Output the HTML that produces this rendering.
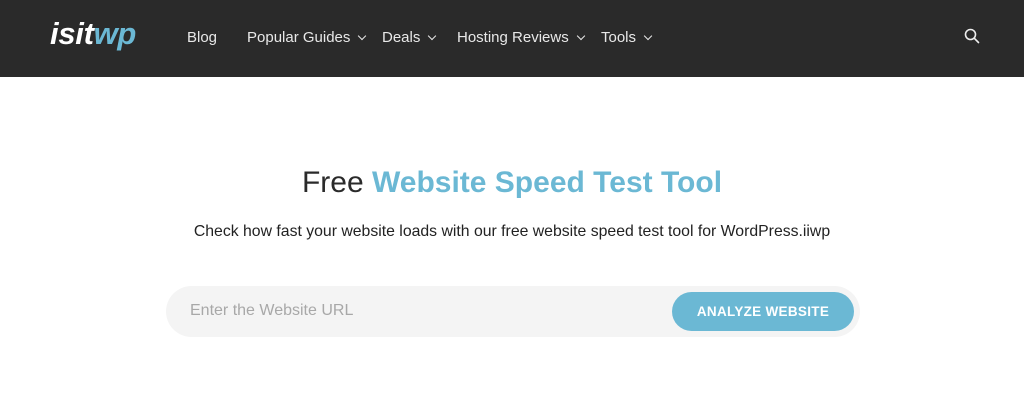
<!DOCTYPE html>
<html><head><style>
*{margin:0;padding:0;box-sizing:border-box}
body{width:1024px;height:407px;background:#fff;font-family:"Liberation Sans",sans-serif;position:relative;overflow:hidden}
.hd{position:absolute;left:0;top:0;width:1024px;height:77px;background:#2a2a2a}
.logo{position:absolute;left:50px;top:16px;font-size:31px;font-weight:bold;font-style:italic;color:#fff;letter-spacing:-0.3px}
.logo span{color:#6bb8d4}
.nav{position:absolute;top:29px;font-size:15px;color:#e8e8e8}
.chev{display:inline-block;width:6px;height:6px;border-right:1.5px solid #e8e8e8;border-bottom:1.5px solid #e8e8e8;transform:rotate(45deg);margin-left:9px;position:relative;top:-3px}
h1{position:absolute;top:166px;left:0;width:1024px;text-align:center;font-size:30px;font-weight:normal;color:#2a2a2a}
h1 span{color:#6bb8d4;font-weight:bold}
p{position:absolute;top:223px;left:0;width:1024px;text-align:center;font-size:15.8px;color:#222}
.box{position:absolute;left:166px;top:286px;width:694px;height:51px;border-radius:26px;background:#f4f4f4}
.ph{position:absolute;left:24px;top:16px;font-size:16px;color:#a8a8a8}
.btn{position:absolute;left:506px;top:6px;width:182px;height:39px;border-radius:20px;background:#6bb8d4;color:#fff;font-weight:bold;font-size:13.5px;text-align:center;line-height:39px;letter-spacing:0.3px}
</style></head><body>
<div class="hd">
<div class="logo">isit<span>wp</span></div>
<div class="nav" style="left:187px">Blog</div>
<div class="nav" style="left:247px">Popular Guides<i class="chev"></i></div>
<div class="nav" style="left:382px">Deals<i class="chev"></i></div>
<div class="nav" style="left:457px">Hosting Reviews<i class="chev"></i></div>
<div class="nav" style="left:601px">Tools<i class="chev"></i></div>
<svg style="position:absolute;left:964px;top:28px" width="16" height="16" viewBox="0 0 16 16"><circle cx="6.5" cy="6.5" r="5" fill="none" stroke="#eee" stroke-width="1.6"/><line x1="10.2" y1="10.2" x2="14.5" y2="14.5" stroke="#eee" stroke-width="1.6" stroke-linecap="round"/></svg>
</div>
<h1>Free <span>Website Speed Test Tool</span></h1>
<p>Check how fast your website loads with our free website speed test tool for WordPress.iiwp</p>
<div class="box"><div class="ph">Enter the Website URL</div><div class="btn">ANALYZE WEBSITE</div></div>
</body></html>
